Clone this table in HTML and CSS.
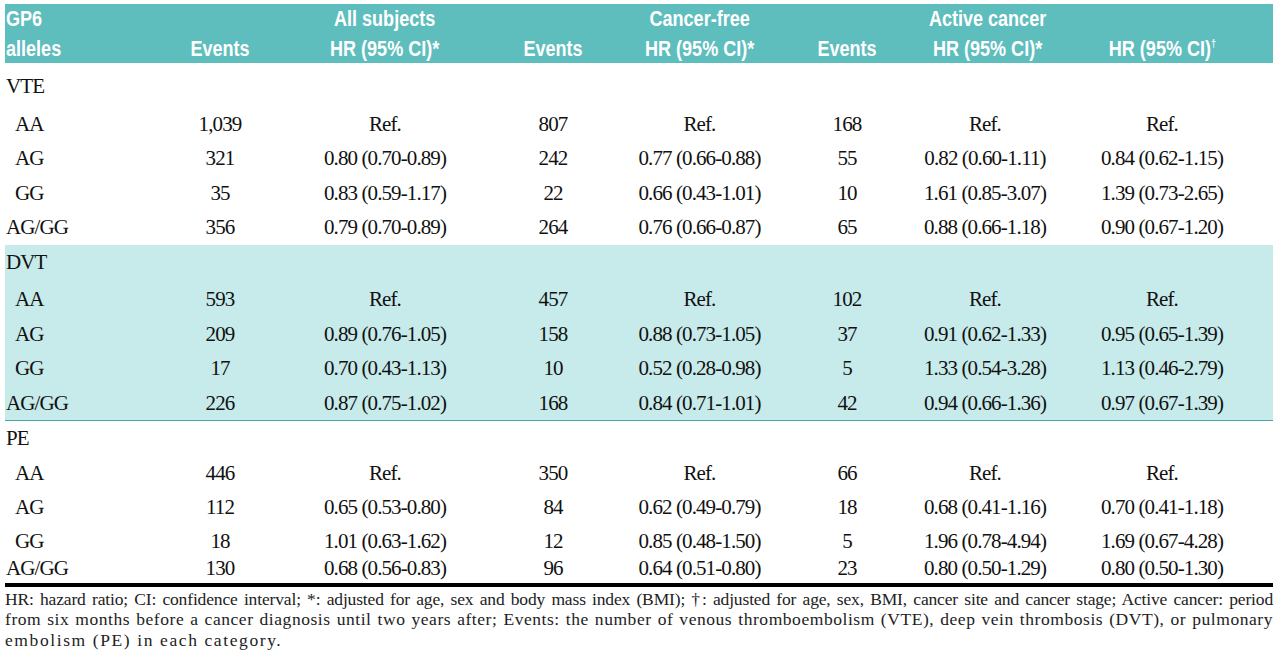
FILE: index.html
```html
<!DOCTYPE html>
<html lang="en">
<head>
<meta charset="utf-8">
<title>GP6 alleles table</title>
<link rel="stylesheet" href="styles.css">
</head>
<body>
<div class="page">
  <div class="table">
    <div class="row head">
      <div><span class="hl">GP6<br>alleles</span></div>
      <div><span class="hl">Events</span></div>
      <div><span class="hl">All subjects<br>HR (95% CI)*</span></div>
      <div><span class="hl">Events</span></div>
      <div><span class="hl">Cancer-free<br>HR (95% CI)*</span></div>
      <div><span class="hl">Events</span></div>
      <div><span class="hl">Active cancer<br>HR (95% CI)*</span></div>
      <div><span class="hl">HR (95% CI)<sup>†</sup></span></div>
    </div>

    <div class="section sec1">
      <div class="row cells label"><div>VTE</div></div>
      <div class="row cells"><div class="ind">AA</div><div>1,039</div><div>Ref.</div><div>807</div><div>Ref.</div><div>168</div><div>Ref.</div><div>Ref.</div></div>
      <div class="row cells"><div class="ind">AG</div><div>321</div><div>0.80 (0.70-0.89)</div><div>242</div><div>0.77 (0.66-0.88)</div><div>55</div><div>0.82 (0.60-1.11)</div><div>0.84 (0.62-1.15)</div></div>
      <div class="row cells"><div class="ind">GG</div><div>35</div><div>0.83 (0.59-1.17)</div><div>22</div><div>0.66 (0.43-1.01)</div><div>10</div><div>1.61 (0.85-3.07)</div><div>1.39 (0.73-2.65)</div></div>
      <div class="row cells"><div>AG/GG</div><div>356</div><div>0.79 (0.70-0.89)</div><div>264</div><div>0.76 (0.66-0.87)</div><div>65</div><div>0.88 (0.66-1.18)</div><div>0.90 (0.67-1.20)</div></div>
    </div>

    <div class="section sec2">
      <div class="row cells label"><div>DVT</div></div>
      <div class="row cells"><div class="ind">AA</div><div>593</div><div>Ref.</div><div>457</div><div>Ref.</div><div>102</div><div>Ref.</div><div>Ref.</div></div>
      <div class="row cells"><div class="ind">AG</div><div>209</div><div>0.89 (0.76-1.05)</div><div>158</div><div>0.88 (0.73-1.05)</div><div>37</div><div>0.91 (0.62-1.33)</div><div>0.95 (0.65-1.39)</div></div>
      <div class="row cells"><div class="ind">GG</div><div>17</div><div>0.70 (0.43-1.13)</div><div>10</div><div>0.52 (0.28-0.98)</div><div>5</div><div>1.33 (0.54-3.28)</div><div>1.13 (0.46-2.79)</div></div>
      <div class="row cells"><div>AG/GG</div><div>226</div><div>0.87 (0.75-1.02)</div><div>168</div><div>0.84 (0.71-1.01)</div><div>42</div><div>0.94 (0.66-1.36)</div><div>0.97 (0.67-1.39)</div></div>
    </div>

    <div class="section sec3">
      <div class="row cells label"><div>PE</div></div>
      <div class="row cells"><div class="ind">AA</div><div>446</div><div>Ref.</div><div>350</div><div>Ref.</div><div>66</div><div>Ref.</div><div>Ref.</div></div>
      <div class="row cells"><div class="ind">AG</div><div>112</div><div>0.65 (0.53-0.80)</div><div>84</div><div>0.62 (0.49-0.79)</div><div>18</div><div>0.68 (0.41-1.16)</div><div>0.70 (0.41-1.18)</div></div>
      <div class="row cells short"><div class="ind">GG</div><div>18</div><div>1.01 (0.63-1.62)</div><div>12</div><div>0.85 (0.48-1.50)</div><div>5</div><div>1.96 (0.78-4.94)</div><div>1.69 (0.67-4.28)</div></div>
      <div class="row cells last"><div>AG/GG</div><div>130</div><div>0.68 (0.56-0.83)</div><div>96</div><div>0.64 (0.51-0.80)</div><div>23</div><div>0.80 (0.50-1.29)</div><div>0.80 (0.50-1.30)</div></div>
    </div>
  </div>

  <div class="foot">
    <span class="l1">HR: hazard ratio; CI: confidence interval; *: adjusted for age, sex and body mass index (BMI); †: adjusted for age, sex, BMI, cancer site and cancer stage; Active cancer: period</span>
    <span class="l2">from six months before a cancer diagnosis until two years after; Events: the number of venous thromboembolism (VTE), deep vein thrombosis (DVT), or pulmonary</span>
    <span class="l3">embolism (PE) in each category.</span>
  </div>
</div>
</body>
</html>
```

FILE: styles.css
```css
html, body {
  margin: 0;
  padding: 0;
  background: #ffffff;
}

.page {
  padding: 4px 7px 0 5px;
}

.table {
  border-bottom: 4px solid #000000;
}

.row {
  display: grid;
  grid-template-columns: 133px 164px 166px 158px 147px 143px 157px 200px;
}

.row > :nth-child(4) { padding-left: 12px; }
.row > :nth-child(6) { padding-left: 5px; }
.row > :nth-child(7) { padding-right: 19px; }
.row > :nth-child(8) { padding-right: 22px; }

/* header */
.head {
  background: #5ebdbd;
  height: 59px;
  box-sizing: border-box;
  padding-bottom: 3px;
  color: #ffffff;
  font-family: "Liberation Sans Narrow", "Liberation Sans", sans-serif;
  font-weight: bold;
  font-size: 22px;
  line-height: 30px;
}

.head > div {
  align-self: end;
  text-align: center;
  white-space: nowrap;
}

.head .hl {
  display: inline-block;
  transform: scaleX(0.82);
  transform-origin: 50% 100%;
}

.head > div:first-child {
  text-align: left;
  padding-left: 1px;
}

.head > div:first-child .hl {
  text-align: left;
  transform-origin: 0 100%;
}

.head sup {
  font-size: 11px;
  vertical-align: 9px;
  line-height: 0;
}

/* body rows */
.cells {
  font-family: "Liberation Serif", serif;
  font-size: 21px;
  line-height: 34.5px;
  height: 34.5px;
  letter-spacing: -0.9px;
  color: #111111;
  text-align: center;
  white-space: nowrap;
}

.cells > div:first-child {
  text-align: left;
  padding-left: 1px;
}

.cells > div.ind {
  padding-left: 10px;
}

.label {
  margin-bottom: 3px;
}

.sec1 {
  padding-top: 6px;
}

.sec2 {
  background: #c7eaea;
  border-bottom: 1px solid #46a7a7;
}

.sec3 .label {
  margin-bottom: 0;
}

.sec3 .short {
  height: 32px;
  line-height: 32px;
}

.sec3 .last {
  height: 23px;
  line-height: 23px;
  margin-bottom: 3px;
}

/* footnote */
.foot {
  font-family: "Liberation Serif", serif;
  font-size: 17.5px;
  line-height: 20.5px;
  color: #222222;
  padding-top: 2px;
}

.foot span {
  display: block;
}

.foot .l1 {
  text-align: justify;
  text-align-last: justify;
  letter-spacing: -0.15px;
}

.foot .l2 {
  text-align: justify;
  text-align-last: justify;
  letter-spacing: 0.55px;
}

.foot .l3 {
  letter-spacing: 1.6px;
}
```
